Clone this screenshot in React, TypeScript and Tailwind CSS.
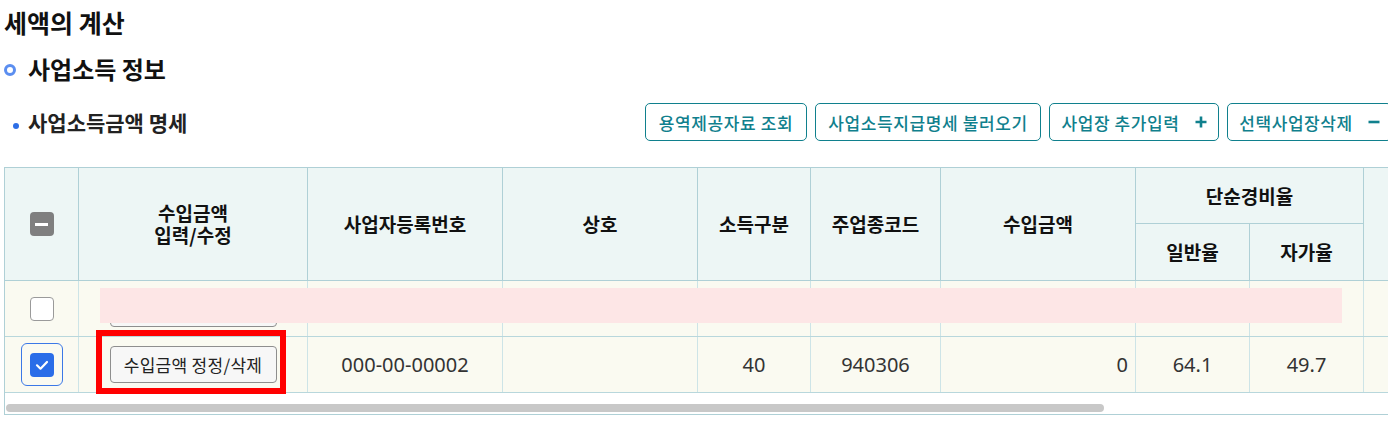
import React from "react";

const HB = "border-[#afd0d6]";
const BV = "border-[#cde4e7]";

function HeadCell({ w, children }: { w: string; children?: React.ReactNode }) {
  return (
    <div className={`${w} h-full shrink-0 border-r ${HB} flex items-center justify-center text-center`}>
      {children}
    </div>
  );
}

function BodyCell({ w, children, cls = "justify-center" }: { w: string; children?: React.ReactNode; cls?: string }) {
  return (
    <div className={`${w} h-full shrink-0 border-r ${BV} flex items-center ${cls}`}>{children}</div>
  );
}

function RowButton() {
  return (
    <button className="w-[167px] h-[37px] rounded-[4px] border border-[#8e8e8e] bg-[#f7f7f7] text-[17px] leading-[17px] tracking-[0.3px] text-[#222] flex items-center justify-center whitespace-nowrap">
      수입금액 정정/삭제
    </button>
  );
}

function TopButton({ w, children, icon }: { w: string; children: React.ReactNode; icon?: "plus" | "minus" }) {
  return (
    <button
      className={`${w} shrink-0 h-[38px] rounded-[5px] border border-[#10808d] text-[#10808d] text-[17px] leading-[17px] tracking-[0.6px] font-medium flex items-center justify-center gap-[15px] bg-white whitespace-nowrap`}
    >
      <span>{children}</span>
      {icon === "plus" && (
        <svg width="12" height="12" viewBox="0 0 12 12" className="shrink-0">
          <path d="M6 0.5V11.5M0.5 6H11.5" stroke="#10808d" strokeWidth="2.6" />
        </svg>
      )}
      {icon === "minus" && (
        <svg width="12" height="12" viewBox="0 0 12 12" className="shrink-0">
          <path d="M0.5 6H11.5" stroke="#10808d" strokeWidth="2.6" />
        </svg>
      )}
    </button>
  );
}

export default function App() {
  const num = "font-['Noto_Sans','Noto_Sans_CJK_KR',sans-serif] text-[20px] leading-[20px] text-[#333]";
  return (
    <div className="w-[1388px] h-[423px] overflow-hidden bg-white font-['Noto_Sans_CJK_KR',sans-serif] text-[#111]">
      <div className="w-[1392px]">
        <h1 className="pl-[4px] pt-[10px] text-[25px] leading-[24px] font-bold">세액의 계산</h1>

        <div className="mt-[23px] flex items-start pl-[4px]">
          <span className="mt-[7px] w-[12px] h-[12px] rounded-full border-[3px] border-[#5b8ef0] shrink-0" />
          <h2 className="ml-[12px] text-[24px] leading-[24px] font-bold">사업소득 정보</h2>
        </div>

        <div className="mt-[22px] flex items-center justify-between h-[38px]">
          <div className="flex items-center pl-[13px]">
            <span className="mt-[8px] w-[6px] h-[6px] rounded-full bg-[#2d6ee6] shrink-0" />
            <h3 className="ml-[9px] text-[21px] leading-[21px] font-semibold text-[#222]">사업소득금액 명세</h3>
          </div>
          <div className="flex gap-[8px]">
            <TopButton w="w-[162px]">용역제공자료 조회</TopButton>
            <TopButton w="w-[226px]">사업소득지급명세 불러오기</TopButton>
            <TopButton w="w-[170px]" icon="plus">사업장 추가입력</TopButton>
            <TopButton w="w-[165px]" icon="minus">선택사업장삭제</TopButton>
          </div>
        </div>

        <div className={`relative mt-[26px] ml-[4px] w-[1388px] border-l border-t border-b ${HB}`}>
          {/* header */}
          <div className={`flex h-[113px] border-b ${HB} bg-[#edf6f5] text-[19px] leading-[22px] font-semibold text-[#111]`}>
            <HeadCell w="w-[74px]">
              <span className="w-[24px] h-[24px] rounded-[4px] bg-[#7f7f7f] flex items-center justify-center">
                <span className="w-[13px] h-[3px] bg-white" />
              </span>
            </HeadCell>
            <HeadCell w="w-[229px]">
              <div className="flex flex-col items-center">
                <span>수입금액</span>
                <span>입력/수정</span>
              </div>
            </HeadCell>
            <HeadCell w="w-[195px]">사업자등록번호</HeadCell>
            <HeadCell w="w-[195px]">상호</HeadCell>
            <HeadCell w="w-[113px]">소득구분</HeadCell>
            <HeadCell w="w-[130px]">주업종코드</HeadCell>
            <HeadCell w="w-[195px]">수입금액</HeadCell>
            <div className="w-[228px] h-full shrink-0 flex flex-col">
              <div className={`h-[56px] border-b border-r ${HB} flex items-center justify-center`}>단순경비율</div>
              <div className="flex-1 flex">
                <div className={`w-[114px] h-full border-r ${HB} flex items-center justify-center`}>일반율</div>
                <div className={`w-[114px] h-full border-r ${HB} flex items-center justify-center`}>자가율</div>
              </div>
            </div>
            <div className="flex-1" />
          </div>

          {/* row 1 */}
          <div className="flex h-[56px] border-b border-[#b8d7dc] bg-[#fafaf1]">
            <BodyCell w="w-[74px]">
              <span className="w-[24px] h-[24px] rounded-[4px] border border-[#9a9a9a] bg-white" />
            </BodyCell>
            <BodyCell w="w-[229px]">
              <RowButton />
            </BodyCell>
            <BodyCell w="w-[195px]" />
            <BodyCell w="w-[195px]" />
            <BodyCell w="w-[113px]" />
            <BodyCell w="w-[130px]" />
            <BodyCell w="w-[195px]" />
            <BodyCell w="w-[114px]" />
            <BodyCell w="w-[114px]" />
            <div className="flex-1" />
          </div>

          {/* row 2 */}
          <div className="flex h-[56px] border-b border-[#b8d7dc] bg-[#fafaf1]">
            <BodyCell w="w-[74px]">
              <span className="w-[42px] h-[43px] rounded-[6px] border border-[#3b78e7] flex items-center justify-center">
                <span className="w-[24px] h-[24px] rounded-[4px] bg-[#2a6de8] flex items-center justify-center">
                  <svg width="24" height="24" viewBox="0 0 24 24">
                    <path d="M7 12.3L10.5 15.7L17 9" fill="none" stroke="white" strokeWidth="2.2" strokeLinecap="round" strokeLinejoin="round" />
                  </svg>
                </span>
              </span>
            </BodyCell>
            <BodyCell w="w-[229px]">
              <RowButton />
            </BodyCell>
            <BodyCell w="w-[195px]">
              <span className={num}>000-00-00002</span>
            </BodyCell>
            <BodyCell w="w-[195px]" />
            <BodyCell w="w-[113px]">
              <span className={num}>40</span>
            </BodyCell>
            <BodyCell w="w-[130px]">
              <span className={num}>940306</span>
            </BodyCell>
            <BodyCell w="w-[195px]" cls="justify-end pr-[7px]">
              <span className={num}>0</span>
            </BodyCell>
            <BodyCell w="w-[114px]">
              <span className={num}>64.1</span>
            </BodyCell>
            <BodyCell w="w-[114px]">
              <span className={num}>49.7</span>
            </BodyCell>
            <div className="flex-1" />
          </div>

          {/* scrollbar */}
          <div className="h-[21px] pt-[11px] pl-[1px]">
            <div className="w-[1098px] h-[8px] rounded-full bg-[#c8c8c8]" />
          </div>

          {/* overlays */}
          <div className="absolute left-[95px] top-[120px] w-[1242px] h-[35px] bg-[#fde6e6]" />
          <div className="absolute left-[91px] top-[162px] w-[190px] h-[64px] border-[6px] border-[#ff0000]" />
        </div>
      </div>
    </div>
  );
}
